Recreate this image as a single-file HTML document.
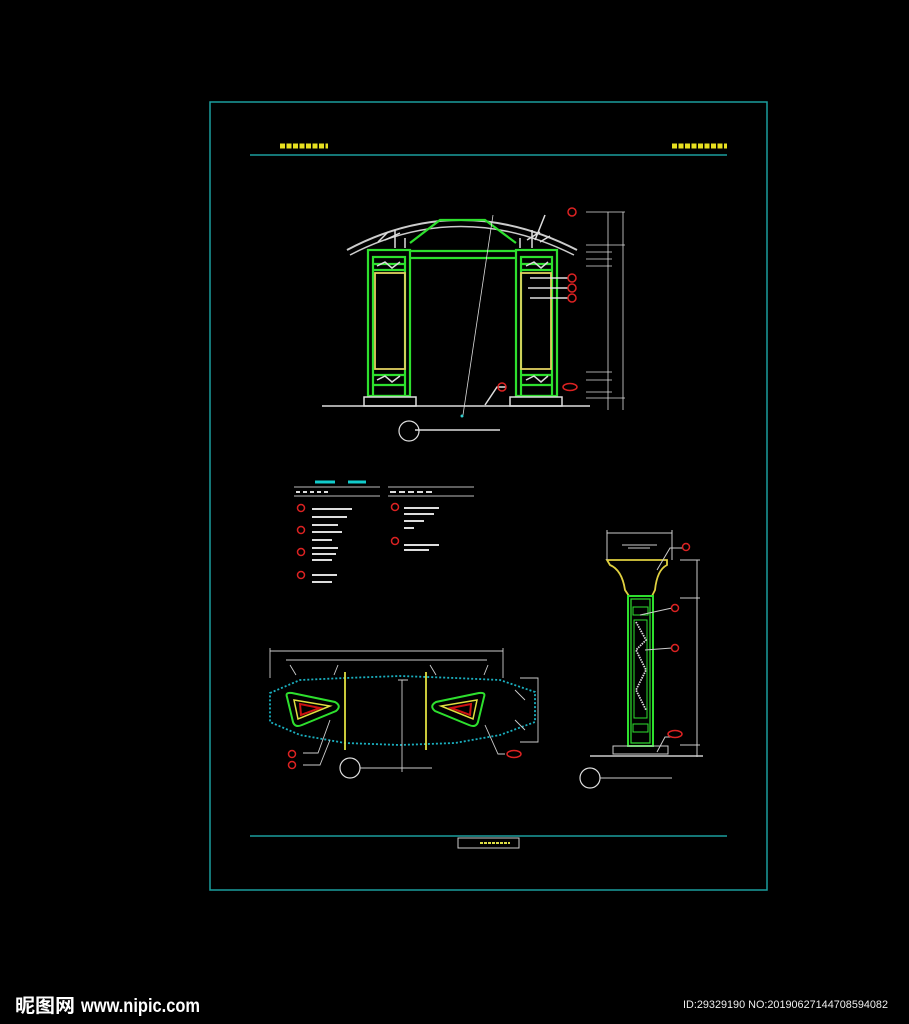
<!DOCTYPE html>
<html><head><meta charset="utf-8"><style>
html,body{margin:0;padding:0;background:#000;width:909px;height:1024px;overflow:hidden}
svg{display:block}
.w{font-family:"Liberation Sans","Noto Sans CJK SC",sans-serif}
</style></head><body>
<svg width="909" height="1024" viewBox="0 0 909 1024" xmlns="http://www.w3.org/2000/svg">
<rect x="0" y="0" width="909" height="1024" fill="#000"/>
<!-- frame -->
<rect x="210" y="102" width="557" height="788" fill="none" stroke="#1b9e9e" stroke-width="1.5"/>
<line x1="250" y1="155" x2="727" y2="155" stroke="#1b9e9e" stroke-width="1.5"/>
<line x1="250" y1="836" x2="727" y2="836" stroke="#1b9e9e" stroke-width="1.5"/>
<rect x="458" y="838" width="61" height="10" fill="none" stroke="#ccc" stroke-width="1"/>
<line x1="480" y1="843" x2="510" y2="843" stroke="#dd4" stroke-width="2" stroke-dasharray="3,1"/>
<line x1="280" y1="146" x2="328" y2="146" stroke="#e8e020" stroke-width="5" stroke-dasharray="5,1.5"/>
<line x1="672" y1="146" x2="727" y2="146" stroke="#e8e020" stroke-width="5" stroke-dasharray="5,1.5"/>

<!-- ARCH -->
<g fill="none">
<path d="M347,250 Q460,190 577,250" stroke="#ccc" stroke-width="2"/>
<path d="M350,255 Q460,198 574,255" stroke="#ccc" stroke-width="1.5"/>
<g stroke="#2ee02e" stroke-width="2.2">
<rect x="368" y="250" width="42" height="146"/>
<rect x="373" y="257" width="32" height="139"/>
<rect x="516" y="250" width="41" height="146"/>
<rect x="521" y="257" width="31" height="139"/>
<line x1="410" y1="251" x2="516" y2="251"/>
<line x1="410" y1="258" x2="516" y2="258"/>
<path d="M410,243 L440,220 L485,220 L516,243"/>
<line x1="373" y1="264" x2="405" y2="264"/><line x1="521" y1="264" x2="552" y2="264"/>
<line x1="373" y1="270" x2="405" y2="270"/><line x1="521" y1="270" x2="552" y2="270"/>
<line x1="373" y1="375" x2="405" y2="375"/><line x1="521" y1="375" x2="552" y2="375"/>
<line x1="373" y1="385" x2="405" y2="385"/><line x1="521" y1="385" x2="552" y2="385"/>
</g>
<rect x="375" y="273" width="30" height="96" stroke="#e0d060" stroke-width="1.8"/>
<rect x="521" y="273" width="30" height="96" stroke="#e0d060" stroke-width="1.8"/>
<g stroke="#ddd" stroke-width="1.5">
<path d="M378,242 L388,232 M395,248 L395,230 M385,240 L400,233 M527,240 L540,232 M532,248 L532,230 M540,242 L550,236 M405,248 L405,238 M520,248 L520,238"/>
<path d="M377,266 L385,262 L392,268 L400,262 M526,266 L534,262 L541,268 L548,262"/>
<path d="M377,380 L385,376 L392,382 L400,376 M526,380 L534,376 L541,382 L548,376"/>
<rect x="364" y="397" width="52" height="9"/><rect x="510" y="397" width="52" height="9"/>
<line x1="322" y1="406" x2="590" y2="406"/>
<line x1="493" y1="215" x2="463" y2="415" stroke-width="0.8"/>
<line x1="415" y1="430" x2="500" y2="430"/>
<path d="M545,215 L535,240 M530,278 L568,278 M528,288 L568,288 M530,298 L568,298 M485,405 L497,387 L506,387"/>
<line x1="608" y1="212" x2="608" y2="410" stroke-width="0.8"/>
<line x1="623" y1="212" x2="623" y2="410" stroke-width="0.8"/>
<path d="M586,212 L625,212 M586,245 L625,245 M586,252 L612,252 M586,259 L612,259 M586,266 L612,266 M586,372 L612,372 M586,380 L612,380 M586,392 L612,392 M586,398 L625,398" stroke-width="0.8"/>
</g>
<circle cx="409" cy="431" r="10" stroke="#ddd" stroke-width="1.2"/>
<circle cx="462" cy="416" r="1.5" fill="#3cc"/>
<g stroke="#d22" stroke-width="1.5">
<circle cx="572" cy="212" r="4"/><circle cx="572" cy="278" r="4"/><circle cx="572" cy="288" r="4"/><circle cx="572" cy="298" r="4"/>
<circle cx="502" cy="387" r="4"/><ellipse cx="570" cy="387" rx="7" ry="3.5"/>
</g>
</g>

<!-- legend -->
<g stroke="#ddd" stroke-width="2">
<line x1="315" y1="482" x2="335" y2="482" stroke="#1cc" stroke-width="3"/><line x1="348" y1="482" x2="366" y2="482" stroke="#1cc" stroke-width="3"/>
<line x1="294" y1="487" x2="380" y2="487" stroke="#bbb" stroke-width="1"/><line x1="294" y1="496" x2="380" y2="496" stroke="#bbb" stroke-width="1"/>
<line x1="388" y1="487" x2="474" y2="487" stroke="#bbb" stroke-width="1"/><line x1="388" y1="496" x2="474" y2="496" stroke="#bbb" stroke-width="1"/>
<line x1="296" y1="492" x2="330" y2="492" stroke-dasharray="4,3"/><line x1="390" y1="492" x2="434" y2="492" stroke-dasharray="6,3"/>
<path d="M312,509 H352 M312,517 H347 M312,525 H338 M312,532 H342 M312,540 H332 M312,548 H338 M312,554 H336 M312,560 H332 M312,575 H337 M312,582 H332"/>
<path d="M404,508 H439 M404,514 H434 M404,521 H424 M404,528 H414 M404,545 H439 M404,550 H429"/>
</g>
<g fill="none" stroke="#d22" stroke-width="1.5">
<circle cx="301" cy="508" r="3.5"/><circle cx="301" cy="530" r="3.5"/><circle cx="301" cy="552" r="3.5"/><circle cx="301" cy="575" r="3.5"/>
<circle cx="395" cy="507" r="3.5"/><circle cx="395" cy="541" r="3.5"/>
</g>

<!-- PLAN -->
<g fill="none">
<path d="M270,693 L300,680 L345,678 L400,676 L455,678 L500,680 L535,692 L535,722 L500,735 L455,743 L400,745 L345,743 L300,735 L270,722 Z" stroke="#1ab0c0" stroke-width="1.8" stroke-dasharray="2,2"/>
<line x1="345" y1="672" x2="345" y2="750" stroke="#e0e040" stroke-width="1.8"/>
<line x1="426" y1="672" x2="426" y2="750" stroke="#e0e040" stroke-width="1.8"/>
<path d="M287,697 Q285,692 292,693 L335,702 Q342,706 336,711 L302,725 Q295,728 293,722 Z" stroke="#2ee02e" stroke-width="2"/>
<path d="M294,700 L330,706 L298,719 Z" stroke="#e0e040" stroke-width="1.5"/>
<path d="M300,704 L320,708 L301,715 Z" stroke="#c11" stroke-width="2"/>
<path d="M484,697 Q486,692 479,693 L436,702 Q429,706 435,711 L469,725 Q476,728 478,722 Z" stroke="#2ee02e" stroke-width="2"/>
<path d="M477,700 L441,706 L473,719 Z" stroke="#e0e040" stroke-width="1.5"/>
<path d="M471,704 L451,708 L470,715 Z" stroke="#c11" stroke-width="2"/>
<g stroke="#ccc" stroke-width="0.9">
<path d="M270,651 L503,651 M270,648 L270,678 M503,648 L503,678 M286,660 L487,660"/>
<path d="M402,680 L402,772 M398,680 L408,680 M360,768 L432,768"/>
<path d="M303,753 L318,753 L330,720 M303,765 L320,765 L330,740 M505,754 L498,754 L485,725"/>
<path d="M520,678 L538,678 L538,742 L520,742"/>
<path d="M290,665 L296,675 M338,665 L334,675 M430,665 L436,675 M488,665 L484,675"/>
<path d="M515,690 L525,700 M515,720 L525,730"/>
</g>
<circle cx="350" cy="768" r="10" stroke="#ddd" stroke-width="1.2"/>
<g stroke="#d22" stroke-width="1.5"><circle cx="292" cy="754" r="3.5"/><circle cx="292" cy="765" r="3.5"/><ellipse cx="514" cy="754" rx="7" ry="3.5"/></g>
</g>

<!-- COLUMN -->
<g fill="none">
<path d="M607,560 L667,560 L667,565 Q657,570 655,590 L652,596 L629,596 L625,590 Q622,570 610,565 Z" stroke="#e0d040" stroke-width="1.8"/>
<rect x="628" y="596" width="25" height="150" stroke="#2ee02e" stroke-width="2"/>
<rect x="631" y="599" width="19" height="144" stroke="#2ee02e" stroke-width="1.2"/>
<rect x="633" y="607" width="15" height="8" stroke="#2ee02e"/>
<rect x="634" y="620" width="13" height="98" stroke="#2ee02e"/>
<rect x="633" y="724" width="15" height="8" stroke="#2ee02e"/>
<path d="M636,622 L646,640 L636,650 L646,670 L636,690 L646,710" stroke="#ddd" stroke-width="1.8" stroke-dasharray="1.5,1"/>
<g stroke="#ccc" stroke-width="1">
<rect x="613" y="746" width="55" height="8"/>
<line x1="590" y1="756" x2="703" y2="756" stroke-width="1.5"/>
<path d="M607,533 L672,533 M607,530 L607,560 M672,530 L672,560 M622,545 L657,545 M628,548 L650,548"/>
<path d="M697,560 L697,757 M680,560 L700,560 M680,598 L700,598 M680,745 L700,745"/>
<path d="M600,778 L672,778 M657,570 L670,548 L683,548 M640,615 L672,608 M645,650 L672,648 M657,752 L665,737 L672,737"/>
</g>
<circle cx="590" cy="778" r="10" stroke="#ddd" stroke-width="1.2"/>
<g stroke="#d22" stroke-width="1.5"><circle cx="686" cy="547" r="3.5"/><circle cx="675" cy="608" r="3.5"/><circle cx="675" cy="648" r="3.5"/><ellipse cx="675" cy="734" rx="7" ry="3.5"/></g>
</g>

<!-- watermark -->
<text x="15" y="1012" font-size="19" font-weight="bold" fill="#fff" font-family="Noto Sans CJK SC, sans-serif" textLength="60" lengthAdjust="spacingAndGlyphs">昵图网</text>
<text x="81" y="1012" font-size="19" font-weight="bold" fill="#fff" font-family="Liberation Sans, sans-serif" textLength="119" lengthAdjust="spacingAndGlyphs">www.nipic.com</text>
<text x="683" y="1008" font-size="11" fill="#eee" font-family="Liberation Sans, sans-serif" textLength="205" lengthAdjust="spacingAndGlyphs">ID:29329190 NO:20190627144708594082</text>
</svg>
</body></html>
